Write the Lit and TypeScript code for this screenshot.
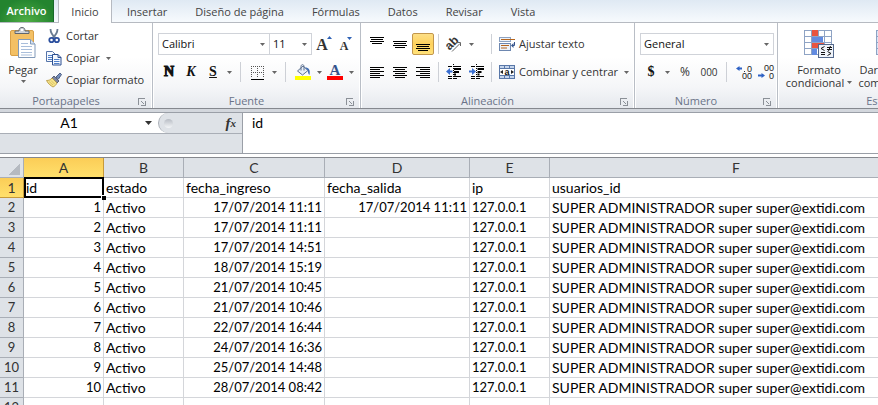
import { LitElement, html, css, svg, nothing } from "lit";
import { customElement, property } from "lit/decorators.js";

const arrow = html`<svg class="arrow" width="5" height="3" viewBox="0 0 5 3" aria-hidden="true"><path d="M0 0h5L2.5 3z" fill="#666"/></svg>`;

/** Short horizontal text lines, each given as [x, y, width]. */
const lines = (rows: number[][]) => html`<svg width="16" height="16" viewBox="0 0 16 16" shape-rendering="crispEdges" aria-hidden="true">
  ${rows.map(([x, y, w]) => svg`<rect x=${x} y=${y} width=${w} height="1" fill="#000"/>`)}
</svg>`;

const block = (y: number) => lines([[1, y, 14], [2, y + 2, 12], [1, y + 4, 14], [3, y + 6, 10]]);
const paragraph = (short: number) =>
  lines([3, 5, 7, 9, 11, 13].map((y, i) => (i % 2 ? [short, y, 10] : [1, y, 14])));

const icons = {
  paste: html`<svg width="28" height="32" viewBox="0 0 28 32" aria-hidden="true">
    <rect x="1.5" y="3.5" width="23" height="25" rx="1.5" fill="#f3c064" stroke="#d9a047"/>
    <path d="M6 6.500V4h4C10 1.500 11 .5 13 .5s3 1 3 3.500h4v2.500z" fill="#cfd4da" stroke="#5f666e"/>
    <rect x="12" y="2" width="2" height="2" fill="#fff"/>
    <path d="M9.500 12.500h12l4.500 4.500v13.500H9.500z" fill="#fff" stroke="#8199b8"/>
    <path d="M21.500 12.500V17H26" fill="#d6e2f1" stroke="#8199b8"/>
    <path d="M12 16.500h7M12 19.500h11M12 22.500h11M12 25.500h11M12 28h11" stroke="#a9bedb"/>
  </svg>`,
  cut: html`<svg width="16" height="16" viewBox="0 0 16 16" aria-hidden="true">
    <path d="M4.500 1c0 3 1.500 6 5 9M11.500 1c0 3-1.500 6-5 9" fill="none" stroke="#6a7c92" stroke-width="1.800"/>
    <circle cx="5.500" cy="12" r="2.200" fill="none" stroke="#2b4f9e" stroke-width="1.800"/>
    <circle cx="10.800" cy="12" r="2.200" fill="none" stroke="#2b4f9e" stroke-width="1.800"/>
  </svg>`,
  copy: html`<svg width="16" height="16" viewBox="0 0 16 16" aria-hidden="true">
    <path d="M.5 1.500h6l2.500 2.500v7.500H.5z" fill="#f5f9ff" stroke="#5574a9"/>
    <path d="M2 5.500h5M2 7.500h5M2 9.500h4" stroke="#4f7fc9"/>
    <path d="M6.500 4.500h5.500l3 3v7.500H6.500z" fill="#f5f9ff" stroke="#2c4f91"/>
    <path d="M12 4.500v3h3" fill="none" stroke="#2c4f91"/>
    <path d="M8 9.500h5.500M8 11.500h5.500M8 13.500h5.500" stroke="#4f7fc9"/>
  </svg>`,
  brush: html`<svg width="16" height="16" viewBox="0 0 16 16" aria-hidden="true">
    <path d="M10 5l4-4 1.500 1.500L12.500 7z" fill="#7790bd" stroke="#33466f" stroke-width=".8"/>
    <path d="M8 4l5 5-2 2-5.500-4.500z" fill="#7d86a0" stroke="#3e4763" stroke-width=".8"/>
    <path d="M6 6l5 5c-1 2-2 3-4 4-1-.5-5-3-6.500-6.500C2.500 8.500 4.500 8 6 6z" fill="#f5e48c" stroke="#b39238" stroke-width=".8"/>
    <path d="M3 9.500l4 3.500M5 8.500l3.500 3.500" stroke="#d6b957" stroke-width=".8"/>
  </svg>`,
  borders: html`<svg width="16" height="16" viewBox="0 0 16 16" shape-rendering="crispEdges" aria-hidden="true">
    <path d="M1 2.500h13M1 8.500h13M1.500 2v12M7.500 2v12M13.500 2v12" stroke="#555" stroke-dasharray="1 1" fill="none"/>
    <path d="M1 15.500h13" stroke="#000"/>
  </svg>`,
  bucket: html`<svg width="16" height="16" viewBox="0 0 16 16" aria-hidden="true">
    <path d="M2.500 7L8 2l5 4.500L7.500 11z" fill="#e6edf6" stroke="#5d7190"/>
    <path d="M6 6.500V2.500C6 0 9 0 9 2.500v4" fill="none" stroke="#5d7190"/>
    <path d="M10 3.500c4 0 5.500 2.500 4.500 7.500-1.500-1-1.500-3-1.500-4.500z" fill="#3d6cb5"/>
    <rect x="0" y="12" width="16" height="4" fill="#ff0"/>
  </svg>`,
  fontColor: html`<svg width="16" height="16" viewBox="0 0 16 16" aria-hidden="true">
    <text x="8" y="11" text-anchor="middle" font-family="Liberation Serif, serif" font-weight="700" font-size="15" fill="#35548c">A</text>
    <rect x="0" y="12" width="16" height="4" fill="#f00"/>
  </svg>`,
  grow: html`<svg width="18" height="18" viewBox="0 0 18 18" aria-hidden="true">
    <text x="7" y="15" text-anchor="middle" font-family="Liberation Serif, serif" font-weight="700" font-size="16" fill="#333">A</text>
    <path d="M12 4h5l-2.500-3z" fill="#2f62b5"/>
  </svg>`,
  shrink: html`<svg width="18" height="18" viewBox="0 0 18 18" aria-hidden="true">
    <text x="7" y="15" text-anchor="middle" font-family="Liberation Serif, serif" font-weight="700" font-size="12" fill="#333">A</text>
    <path d="M10 2h5l-2.500 3z" fill="#2f62b5"/>
  </svg>`,
  orientation: html`<svg width="16" height="16" viewBox="0 0 16 16" aria-hidden="true">
    <text x="0" y="12" transform="rotate(-45 5 9)" font-family="Liberation Sans, sans-serif" font-weight="700" font-size="12" fill="#333">ab</text>
    <path d="M6 15.500l8-8M11 6.500h3.500V10" fill="none" stroke="#666"/>
  </svg>`,
  outdent: html`<svg width="16" height="16" viewBox="0 0 16 16" aria-hidden="true">
    <path d="M2 2.500h4M8 2.500h7M2 12.500h4M8 12.500h7M2 14.500h4M8 14.500h3" stroke="#000"/>
    <path d="M8 5h7M8 8h5M8 10.500h2" stroke="#000" stroke-width="2"/>
    <path d="M0 7.500L4 4v2.500h2.500v2H4V11z" fill="#3a6fd0"/>
    <path d="M7.500 0v16" stroke="#000" stroke-dasharray="1 1"/>
  </svg>`,
  indent: html`<svg width="16" height="16" viewBox="0 0 16 16" aria-hidden="true">
    <path d="M2 2.500h4M8 2.500h7M2 12.500h4M8 12.500h7M2 14.500h4M8 14.500h3" stroke="#000"/>
    <path d="M8.500 5h6.500M8.500 8h4M8.500 10.500h2" stroke="#000" stroke-width="2"/>
    <path d="M7 7.500L3 4v2.500H0v2h3V11z" fill="#3a6fd0"/>
    <path d="M7.500 0v16" stroke="#000" stroke-dasharray="1 1"/>
  </svg>`,
  wrap: html`<svg width="16" height="16" viewBox="0 0 16 16" aria-hidden="true">
    <rect x=".5" y="1.500" width="11" height="4" fill="#edf2f9" stroke="#8da3c2"/>
    <rect x=".5" y="7.500" width="11" height="7" fill="#edf2f9" stroke="#6d87b0"/>
    <path d="M2 3.500h14M2 9.500h8M2 12h6" stroke="#b5651d"/>
    <path d="M15.500 6v3.500h-2" fill="none" stroke="#35548c"/>
    <path d="M12 9.500l2.500-2.500v5z" fill="#35548c"/>
  </svg>`,
  merge: html`<svg width="16" height="16" viewBox="0 0 16 16" aria-hidden="true">
    <rect x=".5" y="1.500" width="15" height="13" fill="#c5d5ec" stroke="#5877a8"/>
    <path d="M5.500 1.500v3M10.500 1.500v3M5.500 11.500v3M10.500 11.500v3M.5 4.500h15M.5 11.500h15" stroke="#5877a8"/>
    <rect x="1" y="5" width="14" height="6" fill="#fff"/>
    <text x="8" y="10.500" text-anchor="middle" font-family="Liberation Sans, sans-serif" font-weight="700" font-size="9" fill="#111">a</text>
    <path d="M1 8l3-2v4zM15 8l-3-2v4z" fill="#222"/>
  </svg>`,
  moreDecimals: html`<svg width="18" height="16" viewBox="0 0 18 16" aria-hidden="true">
    <path d="M1 4.500L4.500 2v1.500H7v2H4.500V7z" fill="#2f62c5"/><rect x="9" y="7" width="1" height="1" fill="#333"/>
    <text x="12" y="8" font-family="Liberation Sans, sans-serif" font-size="9" fill="#222">0</text>
    <text x="7" y="15" font-family="Liberation Sans, sans-serif" font-size="9" fill="#222">00</text>
  </svg>`,
  fewerDecimals: html`<svg width="18" height="16" viewBox="0 0 18 16" aria-hidden="true">
    <path d="M8 11.500L4.500 9v1.500H1v2h3.500V14z" fill="#2f62c5"/>
    <text x="7" y="7" font-family="Liberation Sans, sans-serif" font-size="9" fill="#222">00</text>
    <text x="12" y="15" font-family="Liberation Sans, sans-serif" font-size="9" fill="#222">0</text>
  </svg>`,
  conditional: html`<svg width="32" height="30" viewBox="0 0 32 30" aria-hidden="true">
    <rect x="1.500" y="1.500" width="27" height="24" fill="#fff" stroke="#8ea3c4"/>
    <path d="M8.500 1v25M15.500 1v25M21.500 1v25M1 7.500h28M1 13.500h28M1 19.500h28" stroke="#8ea3c4"/>
    <rect x="9" y="1" width="6" height="6" fill="#e8543f"/><rect x="9" y="8" width="11" height="5" fill="#628be0"/>
    <rect x="9" y="14" width="12" height="5" fill="#e8543f"/><rect x="9" y="20" width="5" height="6" fill="#628be0"/>
    <rect x="15.500" y="15.500" width="15" height="13" fill="#f0f4fa" stroke="#54698c"/>
    <path d="M21.500 17.500l-3.500 2 3.500 2M18 23.500h4M18 25.500h4M24 18.500h5M24 20.500h5M27.500 17l-2 5M24.500 22.500l3.500 2-3.500 2" fill="none" stroke="#111"/>
  </svg>`,
  tableStyle: html`<svg width="32" height="30" viewBox="0 0 32 30" aria-hidden="true">
    <rect x="1.500" y="1.500" width="27" height="24" fill="#dbe6f6" stroke="#8ea3c4"/>
    <path d="M8.500 1v25M15.500 1v25M21.500 1v25M1 7.500h28M1 13.500h28M1 19.500h28" stroke="#8ea3c4"/>
  </svg>`,
  launcher: html`<svg width="8" height="8" viewBox="0 0 8 8" shape-rendering="crispEdges" aria-hidden="true">
    <path d="M.5 7V.5H7" fill="none" stroke="#8b9097"/><path d="M3 3l3 3M7.500 3v4.500H3" fill="none" stroke="#8b9097"/>
  </svg>`,
};

@customElement("ribbon-group")
export class RibbonGroup extends LitElement {
  @property() label = "";
  @property({ type: Boolean }) plain = false;

  static styles = css`
    :host { display: flex; flex-direction: column; flex: none; box-sizing: border-box; border-right: 1px solid #b9bec6; box-shadow: inset -1px 0 #fff, 1px 0 #fff; }
    .body { height: 70px; display: flex; }
    .foot { display: flex; align-items: center; height: 15px; color: #6a7388; }
    .label { flex: 1; text-align: center; line-height: 15px; }
    .launch { width: 20px; height: 15px; padding: 3px 0 0; border: 0; background: none; display: flex; align-items: center; justify-content: center; }
  `;

  render() {
    return html`<div class="body"><slot></slot></div>
      <div class="foot">
        <span class="label">${this.label}</span>
        ${this.plain ? nothing : html`<button class="launch" aria-label=${`Opciones de ${this.label}`}>${icons.launcher}</button>`}
      </div>`;
  }
}

const dates = [
  "17/07/2014 11:11", "17/07/2014 11:11", "17/07/2014 14:51", "18/07/2014 15:19", "21/07/2014 10:45",
  "21/07/2014 10:46", "22/07/2014 16:44", "24/07/2014 16:36", "25/07/2014 14:48", "28/07/2014 08:42",
];
const user = "SUPER ADMINISTRADOR super super@extidi.com";
const tabs = ["Insertar", "Diseño de página", "Fórmulas", "Datos", "Revisar", "Vista"];
const columns = ["A", "B", "C", "D", "E", "F"];

@customElement("app-root")
export class AppRoot extends LitElement {
  static styles = css`
    :host { display: flex; flex-direction: column; height: 100vh; overflow: hidden; background: #fff; color: #333; font: 11px/16px "Open Sans", "Noto Sans", sans-serif; }
    button, select, input, textarea { font: inherit; color: inherit; margin: 0; border-radius: 0; box-sizing: border-box; }
    button { border: 0; padding: 0; background: none; display: flex; align-items: center; justify-content: center; white-space: nowrap; }
    svg { display: block; flex: none; }

    .tabs { display: flex; flex: none; height: 23px; background: linear-gradient(#dfe9f3, #f8fbfe); box-shadow: inset 0 -1px #b6bac1; }
    .tab { padding: 0 14px; color: #444; }
    .file { width: 54px; height: 22px; padding: 0; color: #fff; font-weight: 600; background: radial-gradient(ellipse at 50% 100%, #4fae45, #23842f 75%); border-right: 1px solid #17692a; }
    .current { width: 54px; padding: 0; margin: 0 1px 0 4px; background: #fff; border: 1px solid #b6bac1; border-width: 0 1px; }

    .ribbon { display: flex; flex: none; height: 85px; overflow: hidden; background: linear-gradient(#fff 40%, #f5f6f8 75%, #e6e9ee); border-bottom: 1px solid #85888e; }
    .clipboard { width: 153px; }
    .font { width: 208px; }
    .align { width: 274px; }
    .number { width: 143px; }
    .styles { width: 210px; }
    .big { flex-direction: column; justify-content: flex-start; line-height: 13px; }
    .paste { width: 46px; padding-top: 4px; gap: 4px; }
    .stack { display: flex; flex-direction: column; padding-top: 2px; }
    .command { height: 22px; gap: 4px; justify-content: flex-start; }
    .command .arrow { margin-left: 2px; }
    .rows { display: flex; flex-direction: column; gap: 6px; padding: 10px 0 0 5px; }
    .row { display: flex; height: 22px; align-items: center; }
    .tool { width: 22px; height: 22px; }
    .drop { width: 10px; height: 22px; }
    .line { width: 1px; height: 20px; margin: 0 6px; background: #cdd0d6; }
    .tight { gap: 1px; }
    .tight .line { margin: 0 3px; }
    .second { padding-left: 0; }
    .second .line { margin: 0 7px 0 3px; }
    .on { background: linear-gradient(#fddf86, #ffd25d 50%, #ffe27a); border: 1px solid #c2964b; border-radius: 2px; }
    .serif { font: bold 14px/22px "Liberation Serif", serif; color: #111; }
    .heavy { -webkit-text-stroke: 1px #111; }
    .italic { font-style: italic; }
    .under { text-decoration: underline; }
    .combo { display: flex; align-items: center; height: 22px; position: relative; }
    .combo select { width: 100%; height: 22px; padding: 0 3px; border: 1px solid #d0d3d9; background: #fff; appearance: none; color: #111; }
    .combo .arrow { position: absolute; right: 5px; pointer-events: none; }
    .face { width: 112px; }
    .size { width: 43px; margin: 0 1px 0 -1px; }
    .format { width: 134px; }
    .wide { width: 26px; }
    .digits { font-size: 12px; }
    .zeros { font-size: 10px; }
    .choice { width: 74px; padding-top: 6px; gap: 4px; }
    .choice:first-of-type { margin-left: 4px; }
    .next { width: 70px; }
    .caption { display: flex; flex-direction: column; align-items: center; }
    .inline { display: flex; align-items: center; gap: 3px; }

    .formula { display: flex; flex: none; height: 42px; margin-top: 3px; background: #dee2e7; border-top: 1px solid #9a9fa7; border-bottom: 1px solid #9a9fa7; box-shadow: 0 -3px #d3d7dd; box-sizing: border-box; }
    .left { width: 242px; flex: none; }
    .strip { display: flex; height: 21px; box-sizing: border-box; border-bottom: 1px solid #a9aeb6; background: #fff; }
    .name { width: 138px; border: 0; background: none; text-align: center; color: #000; padding: 0; }
    .sheetfont { font: 14px/20px Lato, sans-serif; }
    .namedrop { width: 20px; }
    .fx { flex: 1; display: flex; align-items: center; justify-content: space-between; padding: 0 6px 0 5px; background: #dee2e7; border-left: 1px solid #a9aeb6; border-radius: 10px 0 0 10px; }
    .knob { width: 9px; height: 9px; border-radius: 50%; background: linear-gradient(#b7bcc4, #f4f6f8); }
    .fxbutton { font: italic bold 15px/18px "Liberation Serif", serif; color: #333; }
    .fxbutton small { font-size: 11px; }
    .value { flex: 1; min-width: 0; resize: none; border: 0; border-left: 1px solid #9a9fa7; padding: 0 9px; background: #fff; color: #000; outline: 0; overflow: hidden; }

    .sheet { flex: 1; min-height: 0; overflow: hidden; margin-top: 3px; border-top: 1px solid #85888e; }
    table { border-collapse: separate; border-spacing: 0; table-layout: fixed; width: 923px; color: #000; }
    th, td { box-sizing: border-box; height: 20px; padding: 0 2px; border: 0 solid #d4d6da; border-width: 0 1px 1px 0; line-height: 19px; text-align: left; white-space: nowrap; font-weight: 400; }
    th { padding: 0; text-align: center; color: #333; background: #dee2e7; border-color: #a9aeb6; }
    .corner { background: linear-gradient(135deg, #dee2e7 50%, #b5bac1 50%) 8px 5px / 12px 12px no-repeat #dee2e7; }
    .num { text-align: right; }
    .num, .plainnum { font-size: 13px; }
    .picked { background: linear-gradient(#fbcd57, #ffe06c); border-color: #c79a3a; }
    .active { position: relative; }
    .active::before { content: ""; position: absolute; inset: -1px -1px -1px 0; border: 2px solid #000; }
    .active::after { content: ""; position: absolute; right: -3px; bottom: -3px; width: 4px; height: 4px; background: #000; border: 1px solid #fff; border-width: 1px 0 0 1px; }
    .c0 { width: 24px; } .cA, .cB, .cE { width: 80px; } .cC { width: 141px; } .cD { width: 145px; } .cF { width: 373px; }
  `;

  render() {
    const sep = html`<span class="line"></span>`;
    const drop = (label: string) => html`<button class="drop" aria-label=${label}>${arrow}</button>`;
    const tool = (label: string, icon: unknown, cls = "") =>
      html`<button class="tool ${cls}" aria-label=${label}>${icon}</button>`;

    return html`
      <nav class="tabs">
        <button class="tab file">Archivo</button>
        <button class="tab current">Inicio</button>
        ${tabs.map((t) => html`<button class="tab">${t}</button>`)}
      </nav>
      <section class="ribbon">
        <ribbon-group class="clipboard" label="Portapapeles">
          <button class="big paste">${icons.paste}<span>Pegar</span>${arrow}</button>
          <div class="stack">
            <button class="command">${icons.cut}Cortar</button>
            <button class="command">${icons.copy}Copiar ${arrow}</button>
            <button class="command">${icons.brush}Copiar formato</button>
          </div>
        </ribbon-group>
        <ribbon-group class="font" label="Fuente">
          <div class="rows">
            <div class="row">
              <label class="combo face"><select aria-label="Fuente"><option>Calibri</option></select>${arrow}</label>
              <label class="combo size"><select aria-label="Tamaño"><option>11</option></select>${arrow}</label>
              ${tool("Aumentar tamaño", icons.grow)}${tool("Disminuir tamaño", icons.shrink)}
            </div>
            <div class="row">
              <button class="tool serif heavy">N</button>
              <button class="tool serif italic">K</button>
              <button class="tool serif under">S</button>${drop("Subrayado")}
              ${sep}${tool("Bordes", icons.borders)}${drop("Más bordes")}
              ${sep}${tool("Color de relleno", icons.bucket)}${drop("Más rellenos")}
              ${tool("Color de fuente", icons.fontColor)}${drop("Más colores")}
            </div>
          </div>
        </ribbon-group>
        <ribbon-group class="align" label="Alineación">
          <div class="rows">
            <div class="row tight">
              ${tool("Alinear arriba", block(1))}${tool("Alinear al medio", block(5))}${tool("Alinear abajo", block(8), "on")}
              ${sep}${tool("Orientación", icons.orientation)}${drop("Más orientaciones")}
            </div>
            <div class="row tight">
              ${tool("Izquierda", paragraph(1))}${tool("Centrar", paragraph(3))}${tool("Derecha", paragraph(5))}
              ${sep}${tool("Disminuir sangría", icons.outdent)}${tool("Aumentar sangría", icons.indent)}
            </div>
          </div>
          <div class="rows second">
            <div class="row">${sep}<button class="command">${icons.wrap}Ajustar texto</button></div>
            <div class="row">${sep}<button class="command">${icons.merge}Combinar y centrar ${arrow}</button></div>
          </div>
        </ribbon-group>
        <ribbon-group class="number" label="Número">
          <div class="rows">
            <div class="row"><label class="combo format"><select aria-label="Formato de número"><option>General</option></select>${arrow}</label></div>
            <div class="row">
              <button class="tool serif">$</button>${drop("Más monedas")}
              <button class="tool wide digits">%</button>
              <button class="tool zeros">000</button>
              ${sep}${tool("Aumentar decimales", icons.moreDecimals)}${tool("Disminuir decimales", icons.fewerDecimals)}
            </div>
          </div>
        </ribbon-group>
        <ribbon-group class="styles" label="Estilos" plain>
          <button class="big choice">${icons.conditional}<span class="caption"><span>Formato</span><span class="inline">condicional ${arrow}</span></span></button>
          <button class="big choice next">${icons.tableStyle}<span class="caption"><span>Dar formato</span><span class="inline">como tabla ${arrow}</span></span></button>
        </ribbon-group>
      </section>
      <section class="formula">
        <div class="left">
          <div class="strip">
            <input class="name sheetfont" aria-label="Cuadro de nombres" value="A1">
            <button class="namedrop" aria-label="Nombres"><svg width="7" height="4" viewBox="0 0 7 4"><path d="M0 0h7L3.500 4z" fill="#333"/></svg></button>
            <div class="fx"><span class="knob"></span><button class="fxbutton" aria-label="Insertar función">f<small>x</small></button></div>
          </div>
        </div>
        <textarea class="value sheetfont" aria-label="Barra de fórmulas" .value=${"id"}></textarea>
      </section>
      <main class="sheet">
        <table class="sheetfont">
          <colgroup><col class="c0">${columns.map((c) => html`<col class="c${c}">`)}</colgroup>
          <thead><tr><th class="corner"></th>${columns.map((c, i) => html`<th class=${i ? "" : "picked"} scope="col">${c}</th>`)}</tr></thead>
          <tbody>
            <tr><th class="picked" scope="row">1</th><td class="active">id</td><td>estado</td><td>fecha_ingreso</td><td>fecha_salida</td><td>ip</td><td>usuarios_id</td></tr>
            ${dates.map((d, i) => html`<tr><th class="plainnum" scope="row">${i + 2}</th><td class="num">${i + 1}</td><td>Activo</td><td class="num">${d}</td><td class="num">${i ? "" : d}</td><td class="plainnum">127.0.0.1</td><td>${user}</td></tr>`)}
            <tr><th class="plainnum" scope="row">12</th>${columns.map(() => html`<td></td>`)}</tr>
          </tbody>
        </table>
      </main>`;
  }
}
